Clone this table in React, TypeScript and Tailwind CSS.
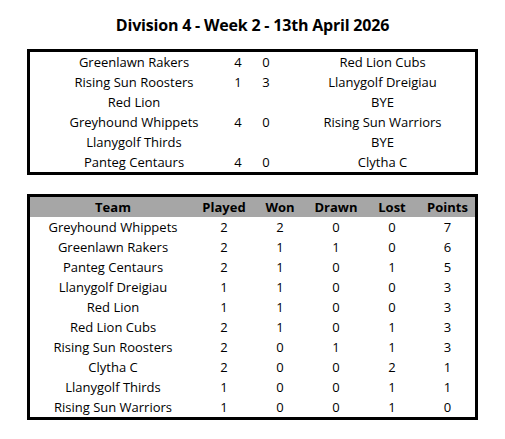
const fixtures = [
  { home: "Greenlawn Rakers", hs: "4", as: "0", away: "Red Lion Cubs" },
  { home: "Rising Sun Roosters", hs: "1", as: "3", away: "Llanygolf Dreigiau" },
  { home: "Red Lion", hs: "", as: "", away: "BYE" },
  { home: "Greyhound Whippets", hs: "4", as: "0", away: "Rising Sun Warriors" },
  { home: "Llanygolf Thirds", hs: "", as: "", away: "BYE" },
  { home: "Panteg Centaurs", hs: "4", as: "0", away: "Clytha C" },
];

const table = [
  ["Greyhound Whippets", 2, 2, 0, 0, 7],
  ["Greenlawn Rakers", 2, 1, 1, 0, 6],
  ["Panteg Centaurs", 2, 1, 0, 1, 5],
  ["Llanygolf Dreigiau", 1, 1, 0, 0, 3],
  ["Red Lion", 1, 1, 0, 0, 3],
  ["Red Lion Cubs", 2, 1, 0, 1, 3],
  ["Rising Sun Roosters", 2, 0, 1, 1, 3],
  ["Clytha C", 2, 0, 0, 2, 1],
  ["Llanygolf Thirds", 1, 0, 0, 1, 1],
  ["Rising Sun Warriors", 1, 0, 0, 1, 0],
];

const headers = ["Team", "Played", "Won", "Drawn", "Lost", "Points"];

export default function App() {
  return (
    <div className="w-[505px] h-[439px] bg-white text-black font-['Open_Sans',sans-serif]">
      <div className="h-[50px] flex items-center justify-center">
        <h1 className="text-[16px] font-bold tracking-[-0.2px]">
          Division 4 - Week 2 - 13th April 2026
        </h1>
      </div>

      <div className="ml-[27px] -mt-[1px] w-[451px] border-[3px] border-black pl-[4px]">
        {fixtures.map((f, i) => (
          <div
            key={i}
            className="grid grid-cols-[200px_8px_48px_1fr] h-[20px] items-center text-[13px] leading-none"
          >
            <span className="text-center">{f.home}</span>
            <span className="text-center">{f.hs}</span>
            <span className="text-center">{f.as}</span>
            <span className="text-center">{f.away}</span>
          </div>
        ))}
      </div>

      <div className="ml-[27px] mt-[19px] w-[451px] border-[3px] border-black">
        <div className="grid grid-cols-[166px_56px_56px_56px_56px_1fr] h-[20px] items-center bg-[#a6a6a6] text-[13px] font-bold leading-none">
          {headers.map((h) => (
            <span key={h} className="text-center">
              {h}
            </span>
          ))}
        </div>
        {table.map((r, i) => (
          <div
            key={i}
            className="grid grid-cols-[166px_56px_56px_56px_56px_1fr] h-[20px] items-center text-[13px] leading-none"
          >
            {r.map((c, j) => (
              <span key={j} className="text-center">
                {c}
              </span>
            ))}
          </div>
        ))}
      </div>
    </div>
  );
}
